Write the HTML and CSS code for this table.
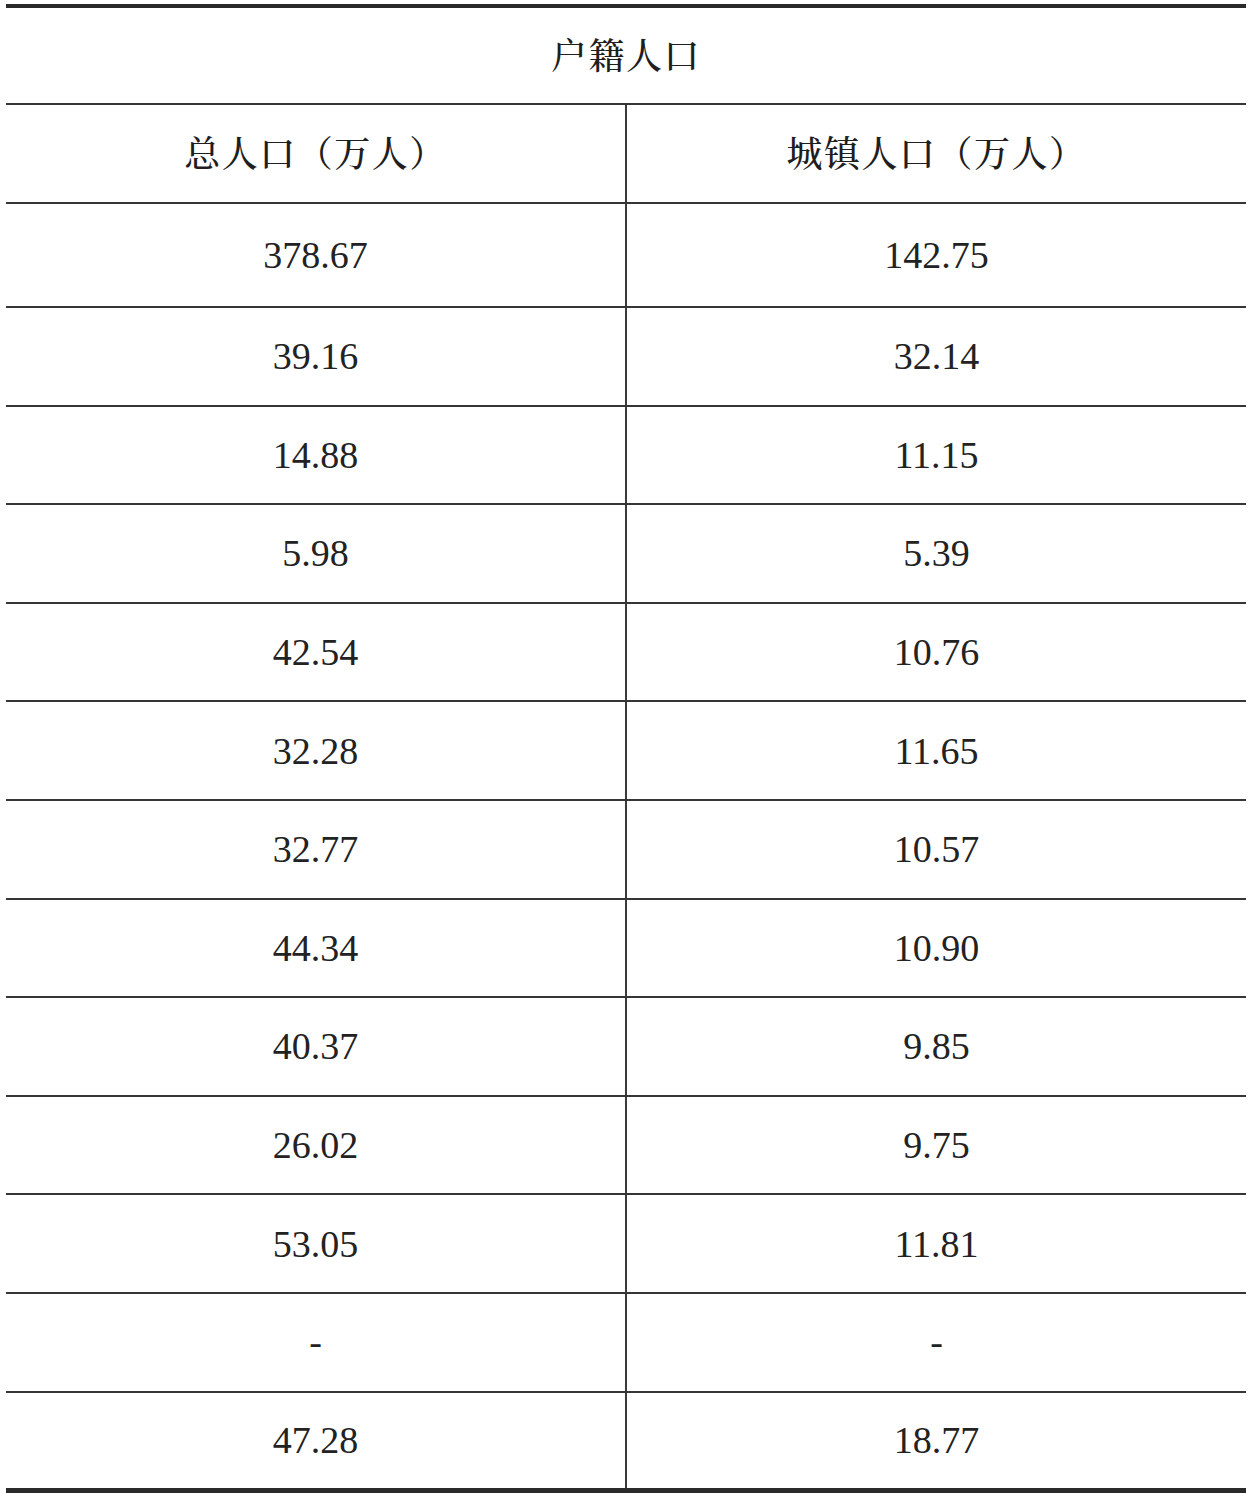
FILE: index.html
```html
<!DOCTYPE html>
<html lang="zh-CN">
<head>
<meta charset="utf-8">
<title>户籍人口</title>
<link rel="stylesheet" href="styles.css">
</head>
<body>
<div class="page">
  <div class="table">
    <div class="row head-top"><div class="cell cjk">户籍人口</div></div>
    <div class="row head-sub"><div class="cell cjk">总人口（万人）</div><div class="cell cjk">城镇人口（万人）</div></div>
    <div class="row first"><div class="cell">378.67</div><div class="cell">142.75</div></div>
    <div class="row"><div class="cell">39.16</div><div class="cell">32.14</div></div>
    <div class="row"><div class="cell">14.88</div><div class="cell">11.15</div></div>
    <div class="row"><div class="cell">5.98</div><div class="cell">5.39</div></div>
    <div class="row"><div class="cell">42.54</div><div class="cell">10.76</div></div>
    <div class="row"><div class="cell">32.28</div><div class="cell">11.65</div></div>
    <div class="row"><div class="cell">32.77</div><div class="cell">10.57</div></div>
    <div class="row"><div class="cell">44.34</div><div class="cell">10.90</div></div>
    <div class="row"><div class="cell">40.37</div><div class="cell">9.85</div></div>
    <div class="row"><div class="cell">26.02</div><div class="cell">9.75</div></div>
    <div class="row"><div class="cell">53.05</div><div class="cell">11.81</div></div>
    <div class="row"><div class="cell">-</div><div class="cell">-</div></div>
    <div class="row last"><div class="cell">47.28</div><div class="cell">18.77</div></div>
  </div>
</div>
</body>
</html>
```

FILE: styles.css
```css
html, body {
  margin: 0;
  padding: 0;
  background: #ffffff;
}

.page {
  padding: 4px 2px 0 6px;
}

.table {
  border-top: 4px solid #2a2a2a;
  border-bottom: 5px solid #2a2a2a;
  font-family: "Liberation Serif", "Times New Roman", serif;
  font-size: 38px;
  color: #222222;
}

.row {
  display: flex;
  box-sizing: border-box;
  height: 98.6px;
  border-bottom: 2px solid #353535;
}

.row.head-top { height: 97px; }
.row.head-sub { height: 99px; }
.row.first { height: 104px; }
.row.last { height: 95.4px; border-bottom: none; }

.cell {
  flex: 1 1 0;
  display: flex;
  align-items: center;
  justify-content: center;
  line-height: 1;
}

.cell + .cell {
  border-left: 2px solid #3a3a3a;
}

.cjk {
  font-family: "Noto Serif CJK SC", "Noto Sans CJK SC", sans-serif;
  font-size: 36px;
  font-weight: 500;
  letter-spacing: 1.5px;
  padding-bottom: 3px;
  color: #1e1e1e;
}
```
